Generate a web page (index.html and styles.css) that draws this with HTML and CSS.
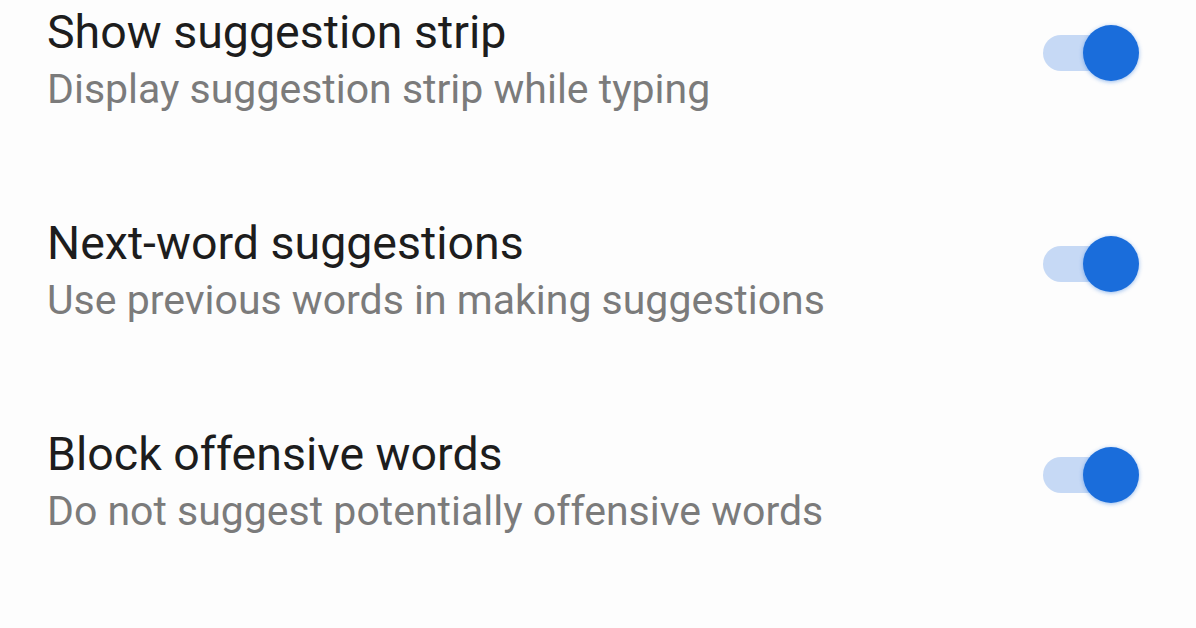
FILE: index.html
```html
<!DOCTYPE html>
<html lang="en">
<head>
  <meta charset="UTF-8" />
  <meta name="viewport" content="width=device-width, initial-scale=1.0"/>
  <title>Text correction</title>
  <link rel="stylesheet" href="styles.css">
</head>
<body>

  <div class="settings-list">
    <div class="setting-row">
      <div class="setting-text">
        <div class="setting-title">Show suggestion strip</div>
        <div class="setting-summary">Display suggestion strip while typing</div>
      </div>
      <div class="switch on"><span class="thumb"></span></div>
    </div>

    <div class="setting-row">
      <div class="setting-text">
        <div class="setting-title">Next-word suggestions</div>
        <div class="setting-summary">Use previous words in making suggestions</div>
      </div>
      <div class="switch on"><span class="thumb"></span></div>
    </div>

    <div class="setting-row">
      <div class="setting-text">
        <div class="setting-title">Block offensive words</div>
        <div class="setting-summary">Do not suggest potentially offensive words</div>
      </div>
      <div class="switch on"><span class="thumb"></span></div>
    </div>
  </div>

</body>
</html>
```

FILE: styles.css
```css
body {
  margin: 0;
  padding: 0;
  height: 100vh;
  overflow: hidden;
  font-family: Roboto, "Noto Sans", Arial, sans-serif;
  background: #fdfdfd;
}

.settings-list {
  display: flex;
  flex-direction: column;
  padding: 0 57px 0 47px;
}

.setting-row {
  display: flex;
  justify-content: space-between;
  align-items: flex-start;
  height: 211px;
}

.setting-title {
  font-size: 46.5px;
  line-height: 56px;
  color: #1d1d1d;
  margin-top: 4px;
}

.setting-summary {
  font-size: 41px;
  line-height: 58px;
  color: #7b7b7b;
}

/* toggle: pale track with the thumb pushed to the right */
.switch {
  position: relative;
  width: 96px;
  height: 56px;
  margin-top: 25px;
}

.switch::before {
  content: "";
  position: absolute;
  left: 0;
  top: 10px;
  width: 70px;
  height: 36px;
  border-radius: 18px;
  background: #c6d9f5;
}

.switch .thumb {
  position: absolute;
  right: 0;
  top: 0;
  width: 56px;
  height: 56px;
  border-radius: 50%;
  background: #1a6ddb;
  box-shadow: 0 1px 4px rgba(26, 109, 219, 0.45);
}
```
